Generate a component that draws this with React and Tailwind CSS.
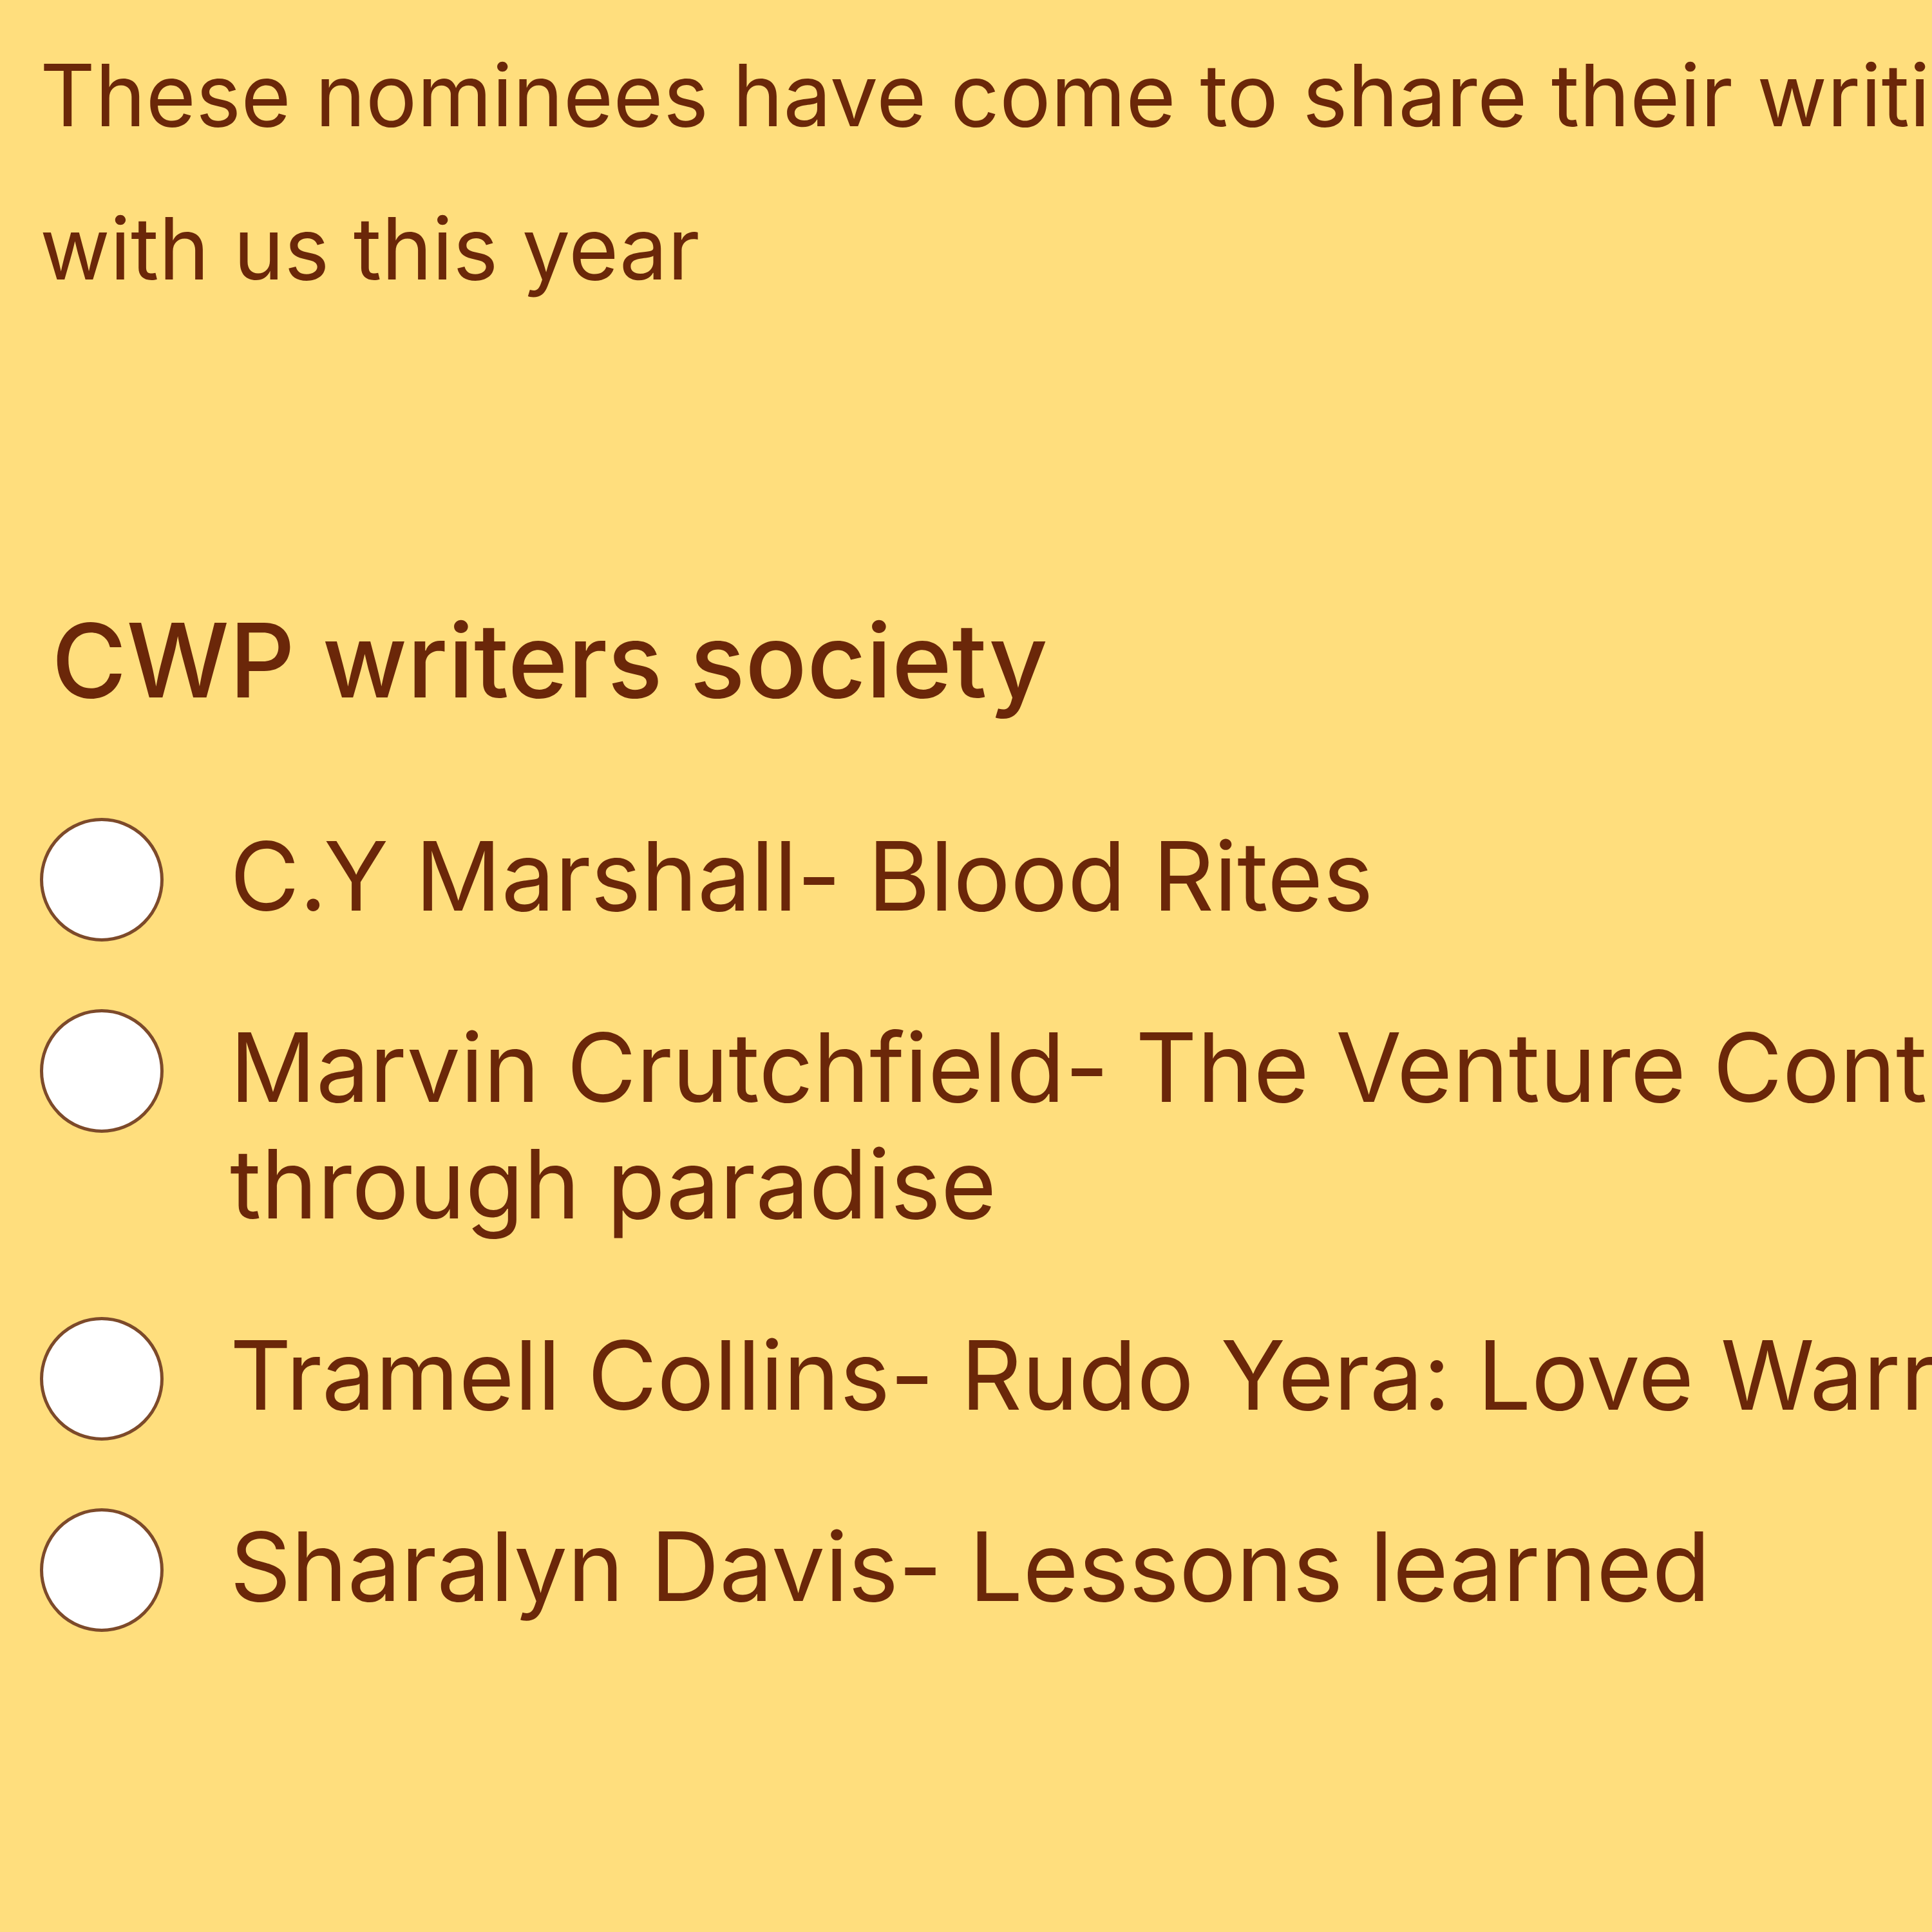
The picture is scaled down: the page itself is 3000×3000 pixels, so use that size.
import React from "react";

const nominees = [
  "C.Y Marshall- Blood Rites",
  "Marvin Crutchfield- The Venture Continues: A Journey through paradise",
  "Tramell Collins- Rudo Yera: Love Warriors",
  "Sharalyn Davis- Lessons learned",
];

function Radio() {
  return (
    <span className="block shrink-0 size-[192px] rounded-full bg-white border-[5px] border-[#7d4a2a] -mb-[11px]" />
  );
}

export default function App() {
  return (
    <div
      className="w-[3000px] h-[3000px] overflow-hidden bg-[#ffde7d] text-[#6b2709]"
      style={{ fontFamily: "Inter, 'Noto Sans', sans-serif" }}
    >
      <div className="w-[4500px] pl-[62px] pt-[29px]">
        <p className="w-[3350px] text-[133px] leading-[238px]">
          These nominees have come to share their writing with us this year
        </p>

        <h2 className="mt-[427px] ml-[18px] text-[159px] leading-[186px] font-medium">
          CWP writers society
        </h2>

        <div className="mt-[152px] flex flex-col gap-[116px]">
          {nominees.map((name) => (
            <label key={name} className="flex items-start gap-[103px]">
              <Radio />
              <span className="w-[4000px] text-[148px] leading-[181px]">{name}</span>
            </label>
          ))}
        </div>
      </div>
    </div>
  );
}
